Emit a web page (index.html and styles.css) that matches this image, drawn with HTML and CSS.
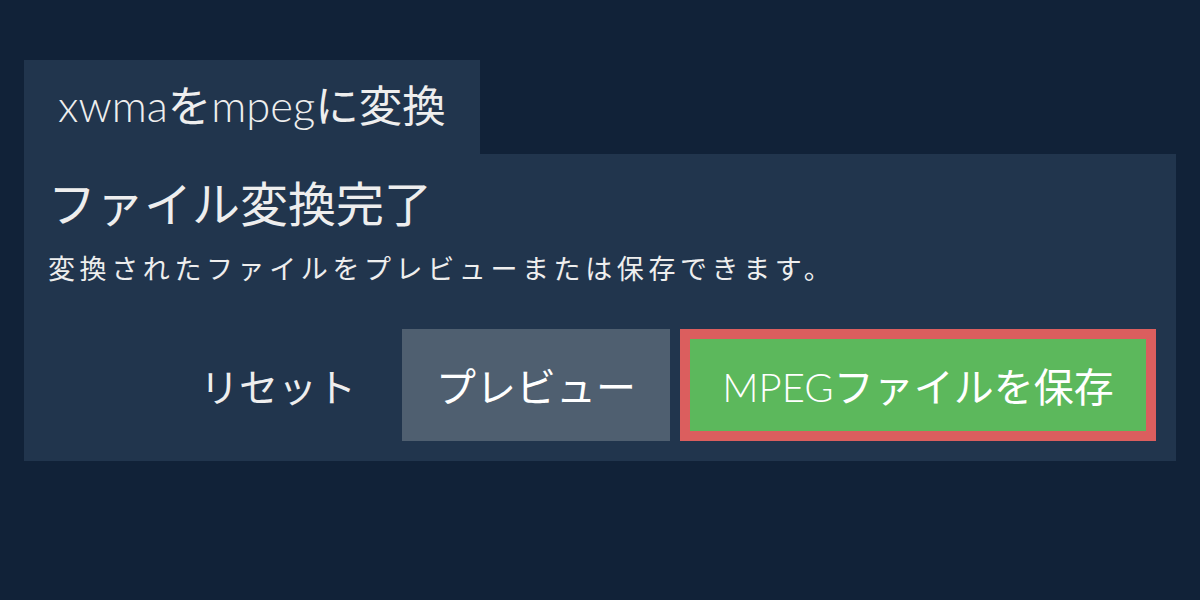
FILE: index.html
```html
<!DOCTYPE html>
<html lang="ja">
<head>
    <meta charset="UTF-8">
    <meta name="viewport" content="width=device-width, initial-scale=1.0">
    <title>xwmaをmpegに変換</title>
    <link rel="stylesheet" href="styles.css">
</head>
<body>
    <div class="converter">
        <div class="tab"><span class="latin">xwma</span>を<span class="latin">mpeg</span>に変換</div>
        <div class="panel">
            <h1>ファイル変換完了</h1>
            <p class="note">変換されたファイルをプレビューまたは保存できます。</p>
            <div class="actions">
                <button class="btn btn-reset">リセット</button>
                <button class="btn btn-preview">プレビュー</button>
                <button class="btn btn-save"><span class="latin">MPEG</span>ファイルを保存</button>
            </div>
        </div>
    </div>
</body>
</html>
```

FILE: styles.css
```css
body {
    font-family: Lato, "Noto Sans CJK JP", sans-serif;
    background-color: #112238;
    color: #eeeeee;
    margin: 0;
    padding: 60px 24px 0;
}
.latin {
    font-weight: 300;
}
.tab {
    display: inline-block;
    background: #21354d;
    height: 94px;
    line-height: 90px;
    padding: 0 34px;
    font-size: 43.5px;
    box-sizing: border-box;
    width: 456px;
    white-space: nowrap;
}
.panel {
    background: #21354d;
    padding: 20px 20px 20px 24px;
    height: 307px;
    box-sizing: border-box;
}
h1 {
    font-size: 48px;
    font-weight: normal;
    margin: 0;
    line-height: 60px;
}
.note {
    font-size: 27px;
    letter-spacing: 4.6px;
    margin: 17px 0 0;
    line-height: 36px;
}
.actions {
    display: flex;
    justify-content: flex-end;
    margin-top: 42px;
    gap: 10px;
}
.btn {
    font-family: Lato, "Noto Sans CJK JP", sans-serif;
    font-size: 40px;
    border: none;
    color: #ffffff;
    height: 112px;
    padding: 0 30px;
    cursor: pointer;
}
.btn-reset {
    background: transparent;
    color: #eeeeee;
    font-size: 39px;
    padding: 0 36px 0 0;
}
.btn-preview {
    background: #4f5f70;
    width: 268px;
}
.btn-save {
    background: #5cb85c;
    border: 10px solid #db5e5e;
    width: 476px;
}
```
